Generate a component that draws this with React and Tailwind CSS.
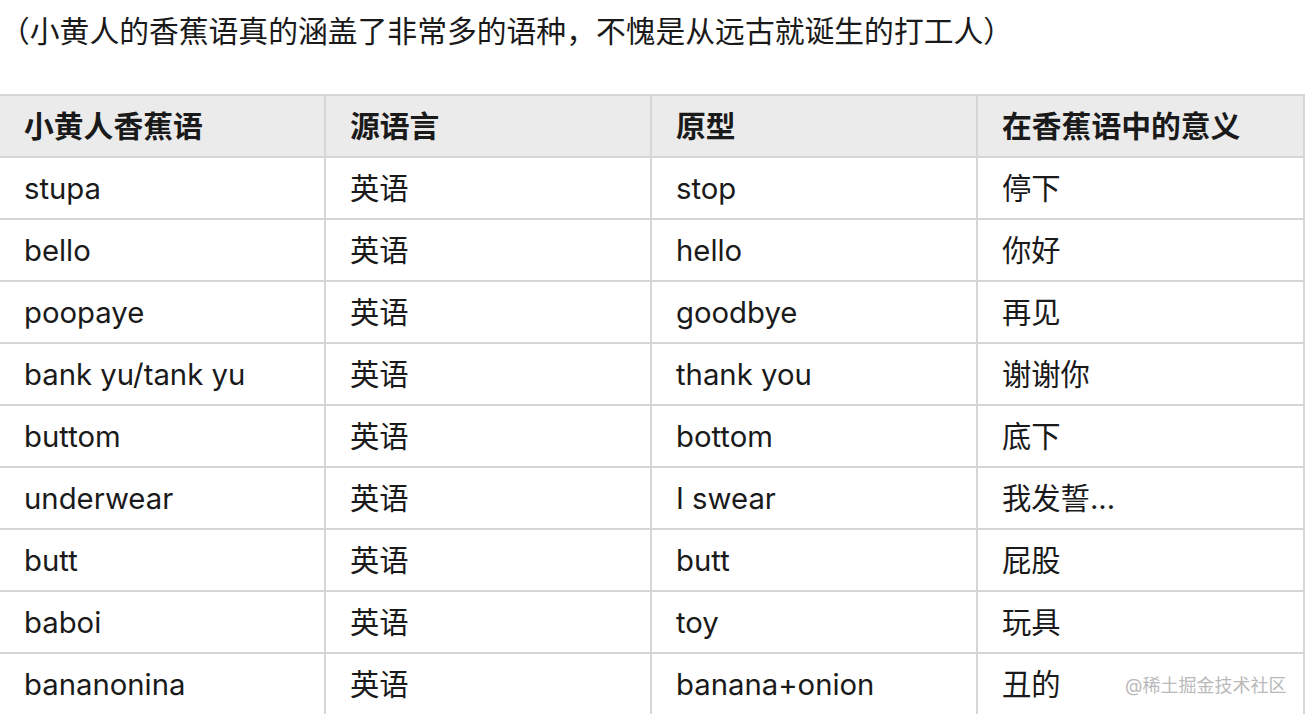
import React from "react";

const rows = [
  ["stupa", "英语", "stop", "停下"],
  ["bello", "英语", "hello", "你好"],
  ["poopaye", "英语", "goodbye", "再见"],
  ["bank yu/tank yu", "英语", "thank you", "谢谢你"],
  ["buttom", "英语", "bottom", "底下"],
  ["underwear", "英语", "I swear", "我发誓..."],
  ["butt", "英语", "butt", "屁股"],
  ["baboi", "英语", "toy", "玩具"],
  ["bananonina", "英语", "banana+onion", "丑的"],
];

const headers = ["小黄人香蕉语", "源语言", "原型", "在香蕉语中的意义"];

const widths = ["w-[325px]", "w-[326px]", "w-[326px]", "w-[327px]"];

const App = () => {
  return (
    <div
      className="relative w-[1306px] h-[714px] overflow-hidden bg-white text-[#1a1a1a]"
      style={{ fontFamily: '"Inter", "Noto Sans CJK SC", sans-serif' }}
    >
      {/* Intro line */}
      <p className="pl-0 pt-[9px] h-[94px] text-[29.8px] leading-[44px]">
        （小黄人的香蕉语真的涵盖了非常多的语种，不愧是从远古就诞生的打工人）
      </p>

      {/* Table */}
      <table className="border-collapse table-fixed w-[1305px]">
        <thead>
          <tr className="bg-[#ebebeb]">
            {headers.map((h, i) => (
              <th
                key={h}
                className={`${widths[i]} h-[62px] border-2 border-[#d6d6d6] ${
                  i === 0 ? "border-l-0" : ""
                } px-[24px] text-left font-semibold text-[29.8px]`}
              >
                {h}
              </th>
            ))}
          </tr>
        </thead>
        <tbody>
          {rows.map((r) => (
            <tr key={r[0]}>
              {r.map((c, i) => (
                <td
                  key={i}
                  className={`h-[62px] border-2 border-[#d6d6d6] ${
                    i === 0 ? "border-l-0" : ""
                  } px-[24px] pt-[2px] text-[29.3px] leading-none whitespace-nowrap`}
                >
                  {c}
                </td>
              ))}
            </tr>
          ))}
        </tbody>
      </table>

      {/* Watermark */}
      <div className="absolute left-[1125px] top-[673px] text-[18px] text-[#b9b9b9] leading-[26px]">
        @稀土掘金技术社区
      </div>
    </div>
  );
};

export default App;
